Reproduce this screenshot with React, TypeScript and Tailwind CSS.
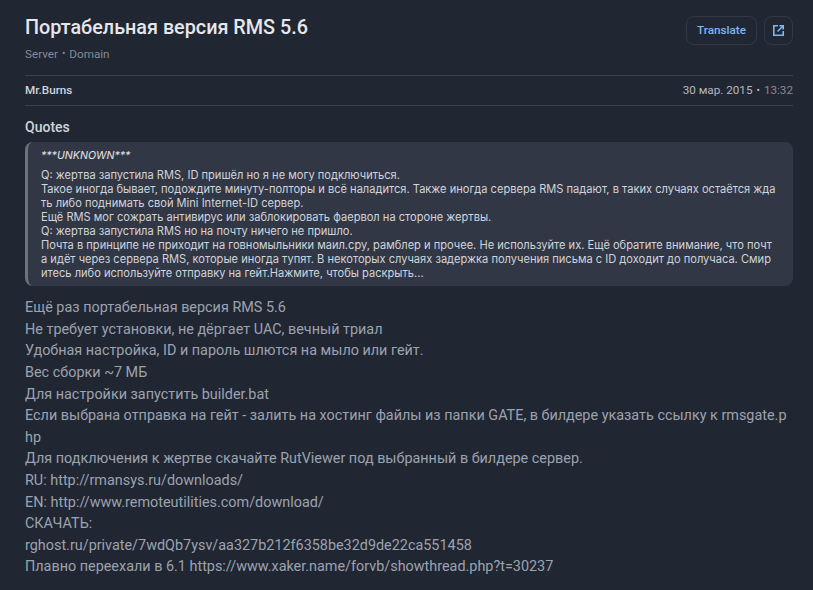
const quoteLines = [
    "Q: жертва запустила RMS, ID пришёл но я не могу подключиться.",
    "Такое иногда бывает, подождите минуту-полторы и всё наладится. Также иногда сервера RMS падают, в таких случаях остаётся ждать либо поднимать свой Mini Internet-ID сервер.",
    "Ещё RMS мог сожрать антивирус или заблокировать фаервол на стороне жертвы.",
    "Q: жертва запустила RMS но на почту ничего не пришло.",
    "Почта в принципе не приходит на говномыльники маил.сру, рамблер и прочее. Не используйте их. Ещё обратите внимание, что почта идёт через сервера RMS, которые иногда тупят. В некоторых случаях задержка получения письма с ID доходит до получаса. Смиритесь либо используйте отправку на гейт.Нажмите, чтобы раскрыть...",
]

const bodyLines = [
    "Ещё раз портабельная версия RMS 5.6",
    "Не требует установки, не дёргает UAC, вечный триал",
    "Удобная настройка, ID и пароль шлются на мыло или гейт.",
    "Вес сборки ~7 МБ",
    "Для настройки запустить builder.bat",
    "Если выбрана отправка на гейт - залить на хостинг файлы из папки GATE, в билдере указать ссылку к rmsgate.php",
    "Для подключения к жертве скачайте RutViewer под выбранный в билдере сервер.",
    "RU: http://rmansys.ru/downloads/",
    "EN: http://www.remoteutilities.com/download/",
    "СКАЧАТЬ:",
    "rghost.ru/private/7wdQb7ysv/aa327b212f6358be32d9de22ca551458",
    "Плавно переехали в 6.1 https://www.xaker.name/forvb/showthread.php?t=30237",
]

export default function App() {
    return (
        <div className="h-[590px] overflow-hidden bg-[#212633] pl-[25px] pr-[20px] pt-[15px] font-['Roboto',sans-serif]">
            <div className="flex items-start justify-between h-[60px]">
                <div className="pt-[1px]">
                    <h1 className="text-[19.8px] leading-[24px] font-medium text-[#e5e7eb]">Портабельная версия RMS 5.6</h1>
                    <div className="mt-[7px] flex items-center text-[11.7px] leading-[14px] text-[#858b96]">
                        Server<span className="mx-[4px] text-[10px]">•</span>Domain
                    </div>
                </div>
                <div className="flex gap-[7px] pt-[1px]">
                    <button className="h-[29px] w-[71px] rounded-lg border border-[#30384a] text-[11.7px] font-medium text-[#7db8f0]">Translate</button>
                    <button className="flex h-[29px] w-[29px] items-center justify-center rounded-lg border border-[#30384a] text-[#7db8f0]">
                        <svg className="h-[11px] w-[11px]" viewBox="0 0 11 11" fill="none" stroke="currentColor" strokeWidth={1.6}>
                            <path d="M5 .8H.8v9.4h9.4V6" />
                            <path d="M4.5 6.5 9.8 1.2M6.4 .8h3.8v3.8" />
                        </svg>
                    </button>
                </div>
            </div>
            <div className="flex h-[31px] items-center justify-between border-y border-[#3a404e] pt-[1px] text-[11.7px]">
                <span className="font-medium text-[#d1d5db]">Mr.Burns</span>
                <span className="flex items-center text-[#b4b8c0]">
                    30 мар. 2015<span className="mx-[4px] text-[10px]">•</span><span className="text-[#858b96]">13:32</span>
                </span>
            </div>
            <h2 className="mt-[11px] text-[14px] leading-[20px] font-medium text-[#d1d5db]">Quotes</h2>
            <div className="mt-[5px] rounded-lg border-l-[3px] border-[#6b7280] bg-[#323745] pl-[13px] pr-[16px] pt-[7px] pb-[6px] text-[11.1px] leading-[14px] text-[#d1d5db] break-all font-['Inter',sans-serif]">
                <div className="mb-[5px] text-[10.6px] italic text-[#e5e7eb]">***UNKNOWN***</div>
                {quoteLines.map((line) => (
                    <div key={line}>{line}</div>
                ))}
            </div>
            <div className="mt-[11.2px] text-[14.4px] leading-[21.6px] text-[#9ca3af] break-all">
                {bodyLines.map((line) => (
                    <div key={line}>{line}</div>
                ))}
            </div>
        </div>
    )
}
